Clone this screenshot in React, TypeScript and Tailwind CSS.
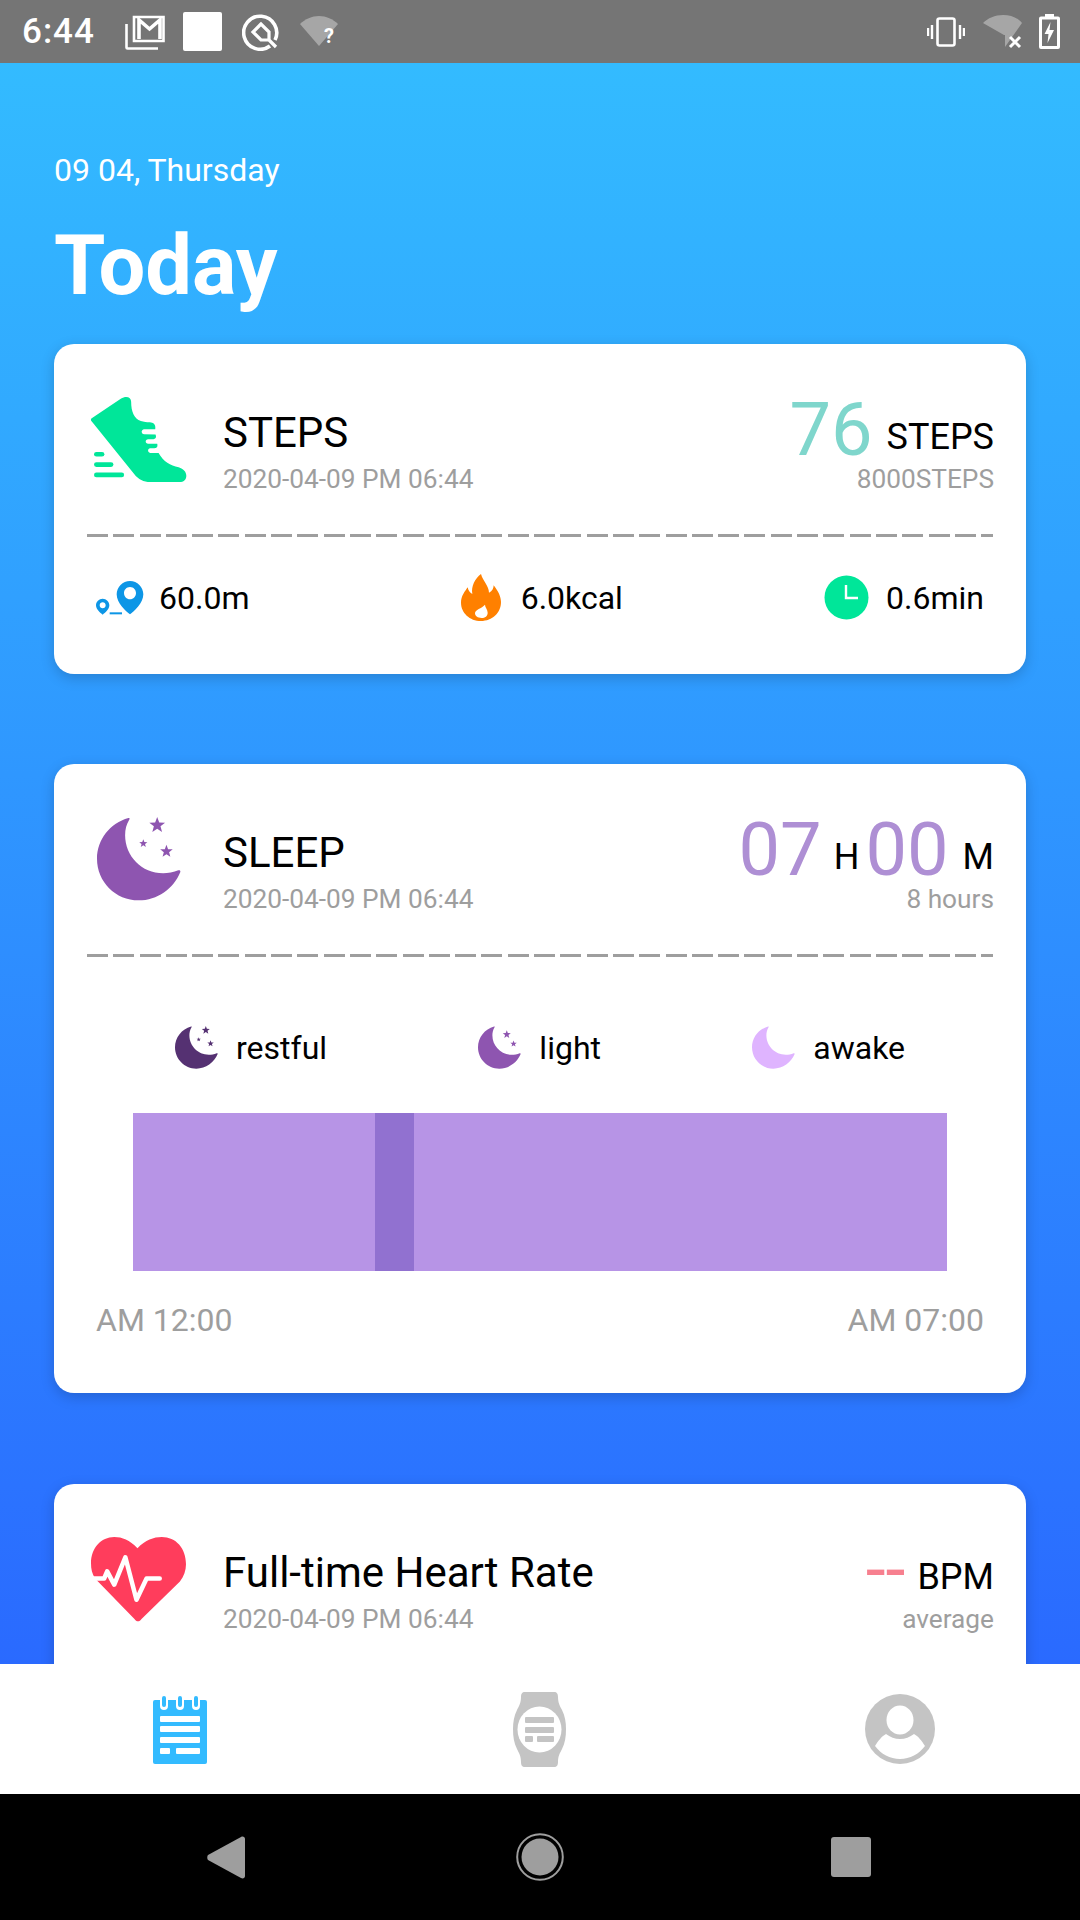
// App.tsx
import React from 'react';

const ROBOTO = "font-['Roboto',sans-serif]";

// small five point star, used on the moons
function starPoints(cx: number, cy: number, r: number) {
  const pts: string[] = [];
  for (let i = 0; i < 10; i++) {
    const rad = i % 2 === 0 ? r : r * 0.42;
    const a = -Math.PI / 2 + (i * Math.PI) / 5;
    pts.push(`${cx + rad * Math.cos(a)},${cy + rad * Math.sin(a)}`);
  }
  return pts.join(' ');
}

type MoonProps = { size: number; color: string; stars: number[][] };

function Moon({ size, color, stars }: MoonProps) {
  return (
    <svg width={size} height={size} viewBox="0 0 254 254" className="shrink-0">
      <path
        fill={color}
        d="M95 3C40 18 0 68 0 126C0 196 56 252 126 252C182 252 232 216 252 166C253 162 250 160 246 161C232 167 214 170 200 170C135 170 85 118 85 55C85 38 89 22 97 9C100 4 99 2 95 3Z"
      />
      {stars.map((s, i) => (
        <polygon key={i} fill={color} points={starPoints(s[0], s[1], s[2])} />
      ))}
    </svg>
  );
}

function Shoe() {
  return (
    <svg width="97" height="87" viewBox="120 165 290 260" className="shrink-0" fill="#00e699">
      <path d="M124 232L212 173C228 164 243 168 243 182C243 212 252 232 272 240C285 245 298 243 306 245C315 248 316 256 315 264L282 264C272 265 272 278 282 279L316 280C319 288 317 293 310 294L294 294C284 295 284 307 294 308L321 308C323 317 320 321 312 321L300 321C292 322 291 333 300 335L325 335C340 362 360 371 385 378C400 383 408 392 408 404C407 416 400 422 388 422L300 422C280 422 265 414 252 398L126 242C122 238 122 235 124 232Z" />
      <rect x="132" y="332" width="31" height="14" rx="7" />
      <rect x="132" y="363" width="58" height="14" rx="7" />
      <rect x="132" y="394" width="90" height="14" rx="7" />
    </svg>
  );
}

function DistancePin() {
  return (
    <svg width="48" height="34" viewBox="0 0 144 102" fill="#0d96e6" className="shrink-0">
      <path d="M102 0C80 0 62 18 62 40C62 66 90 92 102 100C114 92 142 66 142 40C142 18 124 0 102 0ZM102 18C113 18 120 27 120 36C120 46 112 55 102 55C92 55 84 46 84 36C84 27 91 18 102 18Z" />
      <path d="M20 53C9 53 0 62 0 73C0 85 13 96 20 101C27 96 40 85 40 73C40 62 31 53 20 53ZM20 64C25 64 29 68 29 73C29 78 25 82 20 82C15 82 11 78 11 73C11 68 15 64 20 64Z" />
      <rect x="41" y="94" width="37" height="6" />
    </svg>
  );
}

function Flame() {
  return (
    <svg width="40" height="47" viewBox="0 0 120 141" className="shrink-0">
      <path
        fill="#ff8000"
        d="M60 0C66 22 84 36 84 56C94 52 98 42 98 34C112 52 120 68 120 84C120 116 94 141 60 141C26 141 0 116 0 86C0 66 12 52 20 40C22 50 26 56 34 60C30 36 42 14 60 0Z"
      />
      <path fill="#fff" d="M72 92C72 100 80 106 80 116C80 126 72 132 62 132C50 132 42 126 42 118C42 106 62 104 72 92Z" />
    </svg>
  );
}

function Clock() {
  return (
    <svg width="45" height="45" viewBox="0 0 45 45" className="shrink-0">
      <circle cx="22.5" cy="22.5" r="22" fill="#00e699" />
      <path d="M22 10V23H34" fill="none" stroke="#fff" strokeWidth="2.4" />
    </svg>
  );
}

function Heart() {
  return (
    <svg width="96" height="85" viewBox="0 0 95 84" className="ml-[1px] shrink-0">
      <path
        fill="#ff3d5c"
        d="M46 11C38 3 31 0 23 0C10 0 0 11 0 26C0 32 1 36 4 41L43 81C45 84 48 84 50 81L88 44C92 39 94 33 94 27C94 11 84 0 70 0C62 0 54 3 46 11Z"
      />
      <path
        d="M2 41H13L16 34L23 47L34 20L45 62L55 41H68"
        fill="none"
        stroke="#fff"
        strokeWidth="4.500"
        strokeLinecap="round"
        strokeLinejoin="round"
      />
    </svg>
  );
}

function Dashes() {
  return (
    <div className="h-[3px] w-full bg-[repeating-linear-gradient(to_right,#9e9e9e_0,#9e9e9e_21px,transparent_21px,transparent_26.3px)]" />
  );
}

type CardHeadProps = {
  icon: React.ReactNode;
  title: string;
  right: React.ReactNode;
  sub: string;
};

function CardHead({ icon, title, right, sub }: CardHeadProps) {
  return (
    <div className="flex h-[99px] items-start justify-between">
      <div className="flex items-start">
        <div className="flex h-[94px] w-[136px] items-center pl-[3px]">{icon}</div>
        <div className="pt-[15px]">
          <div className="text-[42px] leading-[52px] text-black">{title}</div>
          <div className="mt-[4px] text-[26.25px] leading-[32px] text-[#9e9e9e]">2020-04-09 PM 06:44</div>
        </div>
      </div>
      <div className="-mr-[1px] flex flex-col items-end">
        <div className="mt-[5px] flex h-[66px] items-end text-black">{right}</div>
        <div className="text-[26.25px] leading-[32px] text-[#9e9e9e]">{sub}</div>
      </div>
    </div>
  );
}

function StatItem({ icon, text, className }: { icon: React.ReactNode; text: string; className: string }) {
  return (
    <div className={`flex items-center ${className}`}>
      {icon}
      <span className="text-[32px] leading-[40px] text-black">{text}</span>
    </div>
  );
}

function Legend({ icon, text }: { icon: React.ReactNode; text: string }) {
  return (
    <div className="flex items-center gap-[18px]">
      {icon}
      <span className="text-[32px] leading-[40px] text-black">{text}</span>
    </div>
  );
}

function StatusBar() {
  return (
    <div className="flex h-[63px] shrink-0 items-center bg-[#757575] pl-[22px] pr-[20px]">
      <span className="w-[103px] text-[35px] font-medium leading-none tracking-[1px] text-white">6:44</span>
      {/* mail */}
      <svg width="40" height="36" viewBox="0 0 40 36" fill="none" stroke="#fff" strokeWidth="2.6" className="mr-[18px]">
        <path d="M1.500 10V33.500a1 1 0 0 0 1 1H33" />
        <path d="M9 3h29.500v24H9z" />
        <path d="M14 25V6l10.500 9L35 6v19" strokeWidth="3.600" />
      </svg>
      <div className="mr-[20px] h-[39px] w-[39px] rounded-[2px] bg-white" />
      {/* Q */}
      <svg width="38" height="38" viewBox="0 0 38 38" fill="none" stroke="#fff" strokeWidth="3.600" className="mr-[20px]">
        <path d="M28 33A16.500 16.500 0 1 1 33 27" />
        <path d="M19 11L11 19l8 8h8v-8zM27 27l7 7" strokeWidth="3.200" />
      </svg>
      {/* wifi with question mark */}
      <div className="relative h-[36px] w-[40px]">
        <svg width="38" height="30" viewBox="0 0 38 30" fill="#a6a6a6" className="absolute left-0 top-[2px]">
          <path d="M0 8C5 3 12 0 19 0C26 0 33 3 38 8L19 30Z" />
        </svg>
        <span className="absolute left-[24px] top-[10px] text-[20px] font-bold leading-[24px] text-white">?</span>
      </div>
      <div className="flex-1" />
      {/* vibrate */}
      <svg width="38" height="30" viewBox="0 0 38 30" fill="none" stroke="#fff" className="mr-[18px]">
        <rect x="10.500" y="1.500" width="17" height="27" rx="2" strokeWidth="2.600" />
        <path d="M5 8V22M1 11V19M33 8V22M37 11V19" strokeWidth="2.400" />
      </svg>
      {/* wifi off */}
      <svg width="40" height="34" viewBox="0 0 40 34" className="mr-[16px]">
        <path fill="#a6a6a6" d="M0 8C5 3 12 0 20 0C28 0 35 3 39 8L22 32V20H21Z" />
        <path d="M27 22L37 32M37 22L27 32" stroke="#fff" strokeWidth="3" />
      </svg>
      {/* battery */}
      <svg width="21" height="35" viewBox="0 0 21 35">
        <path fill="#fff" d="M6 0h9v2.500h4a2 2 0 0 1 2 2V33a2 2 0 0 1-2 2H2a2 2 0 0 1-2-2V4.500a2 2 0 0 1 2-2h4zM3 5.500V32h15V5.500z" />
        <path fill="#fff" d="M11.500 8L5.500 20h4L8.500 29l6.500-13h-4.500z" />
      </svg>
    </div>
  );
}

function TabBar() {
  return (
    <div className="flex h-[130px] shrink-0 items-center justify-between bg-white pl-[153px] pr-[145px]">
      <svg width="54" height="70" viewBox="0 0 54 70" className="shrink-0">
        <rect x="0" y="6" width="54" height="64" rx="2" fill="#33bbff" />
        <path d="M11 5V12M27 5V12M43 5V12" stroke="#fff" strokeWidth="8" strokeLinecap="round" />
        <path d="M11 4V11M27 4V11M43 4V11" stroke="#33bbff" strokeWidth="4" strokeLinecap="round" />
        <g fill="#fff">
          <rect x="7" y="22" width="40" height="6" rx="1" />
          <rect x="7" y="32" width="40" height="6" rx="1" />
          <rect x="7" y="43" width="40" height="6" rx="1" />
          <rect x="7" y="54" width="10" height="6" rx="1" />
          <rect x="23" y="54" width="24" height="6" rx="1" />
        </g>
      </svg>
      <svg width="53" height="75" viewBox="0 0 53 75" className="ml-[7px] shrink-0">
        <path
          fill="#c4c4c4"
          d="M12 0H41C44 0 45 2 45 5C45 11 47 14 49 18C52 24 53 30 53 37C53 45 52 51 49 57C47 61 45 64 45 70C45 73 44 75 41 75H12C9 75 8 73 8 70C8 64 6 61 4 57C1 51 0 45 0 37C0 30 1 24 4 18C6 14 8 11 8 5C8 2 9 0 12 0Z"
        />
        <ellipse cx="26.500" cy="37.500" rx="22" ry="23" fill="#fff" />
        <g fill="#c4c4c4">
          <rect x="12" y="25" width="29" height="6" rx="1" />
          <rect x="12" y="35" width="29" height="6" rx="1" />
          <rect x="12" y="44" width="8" height="6" rx="1" />
          <rect x="24" y="44" width="17" height="6" rx="1" />
        </g>
      </svg>
      <svg width="70" height="70" viewBox="0 0 70 70" className="shrink-0">
        <circle cx="35" cy="35" r="35" fill="#c4c4c4" />
        <ellipse cx="35" cy="26" rx="13.500" ry="14.500" fill="#fff" />
        <path
          fill="#fff"
          d="M10 52C13 47 17 42 21 40C25 43 30 45 35 45C40 45 45 43 49 40C53 42 57 47 60 52C54 60 45 65 35 65C25 65 16 60 10 52Z"
        />
      </svg>
    </div>
  );
}

function NavBar() {
  return (
    <div className="flex h-[126px] shrink-0 items-center justify-between bg-black pl-[207px] pr-[209px]">
      <svg width="38" height="43" viewBox="0 0 38 43" fill="#9e9e9e">
        <path d="M1 19L34 1C36 0 38 1 38 3V40C38 42 36 43 34 42L1 24C0 23 0 20 1 19Z" />
      </svg>
      <svg width="48" height="48" viewBox="0 0 48 48" className="ml-[4px]">
        <circle cx="24" cy="24" r="22.800" fill="none" stroke="#9e9e9e" strokeWidth="2" />
        <circle cx="24" cy="24" r="18.500" fill="#9e9e9e" />
      </svg>
      <div className="h-[40px] w-[40px] rounded-[3px] bg-[#9e9e9e]" />
    </div>
  );
}

export default function App() {
  return (
    <div className={`flex h-[1920px] w-[1080px] flex-col overflow-hidden ${ROBOTO}`}>
      <StatusBar />

      <div className="min-h-0 flex-1 overflow-hidden bg-[linear-gradient(to_bottom,#33bbff,#2a6aff)] px-[54px]">
        <div className="pt-[88px] text-[32px] leading-[38px] text-white">09 04, Thursday</div>
        <div className="mt-[28px] text-[83px] font-bold leading-[98px] text-white">Today</div>

        {/* steps */}
        <div className="mt-[29px] h-[330px] rounded-[20px] bg-white px-[33px] pt-[48px] shadow-[0_4px_14px_rgba(0,0,0,0.18)]">
          <CardHead
            icon={<Shoe />}
            title="STEPS"
            sub="8000STEPS"
            right={
              <>
                <span className="text-[74px] leading-[66px] text-[#7fd6cc]">76</span>
                <span className="mb-[8px] ml-[14px] text-[36px] leading-[36px]">STEPS</span>
              </>
            }
          />
          <div className="mt-[43px]">
            <Dashes />
          </div>
          <div className="mt-[37px] flex items-center justify-between pl-[9px] pr-[9px]">
            <StatItem icon={<DistancePin />} text="60.0m" className="gap-[15px]" />
            <StatItem icon={<Flame />} text="6.0kcal" className="ml-[10px] gap-[20px]" />
            <StatItem icon={<Clock />} text="0.6min" className="gap-[17px]" />
          </div>
        </div>

        {/* sleep */}
        <div className="mt-[90px] h-[629px] rounded-[20px] bg-white px-[33px] pt-[48px] shadow-[0_4px_14px_rgba(0,0,0,0.18)]">
          <CardHead
            icon={
              <div className="pl-[7px]">
                <Moon size={84} color="#8e55b0" stars={[[182, 25, 25], [140, 80, 13], [210, 104, 20]]} />
              </div>
            }
            title="SLEEP"
            sub="8 hours"
            right={
              <>
                <span className="text-[74px] leading-[66px] text-[#ae8fd4]">07</span>
                <span className="mb-[8px] ml-[12px] text-[36px] leading-[36px]">H</span>
                <span className="ml-[6px] text-[74px] leading-[66px] text-[#ae8fd4]">00</span>
                <span className="mb-[8px] ml-[14px] text-[36px] leading-[36px]">M</span>
              </>
            }
          />
          <div className="mt-[43px]">
            <Dashes />
          </div>
          <div className="mt-[69px] flex items-center justify-between pl-[88px] pr-[88px]">
            <Legend
              icon={<Moon size={43} color="#553172" stars={[[182, 25, 25], [140, 80, 13], [210, 104, 20]]} />}
              text="restful"
            />
            <Legend icon={<Moon size={43} color="#8e55b0" stars={[[170, 50, 25], [210, 105, 20]]} />} text="light" />
            <Legend icon={<Moon size={43} color="#dfb4ff" stars={[]} />} text="awake" />
          </div>
          <div className="mx-[46px] mt-[44px] flex h-[158px]">
            <div className="w-[242px] bg-[#b794e6]" />
            <div className="w-[39px] bg-[#9171d0]" />
            <div className="flex-1 bg-[#b794e6]" />
          </div>
          <div className="mt-[29px] flex justify-between pl-[9px] pr-[9px] text-[32px] leading-[40px] text-[#9e9e9e]">
            <span>AM 12:00</span>
            <span>AM 07:00</span>
          </div>
        </div>

        {/* heart rate */}
        <div className="mt-[91px] h-[300px] rounded-[20px] bg-white px-[33px] pt-[48px] shadow-[0_4px_14px_rgba(0,0,0,0.18)]">
          <CardHead
            icon={<Heart />}
            title="Full-time Heart Rate"
            sub="average"
            right={
              <>
                <span className="text-[72px] leading-[66px] text-[#f7808f]">--</span>
                <span className="mb-[8px] ml-[12px] text-[36px] leading-[36px]">BPM</span>
              </>
            }
          />
        </div>
      </div>

      <TabBar />
      <NavBar />
    </div>
  );
}
